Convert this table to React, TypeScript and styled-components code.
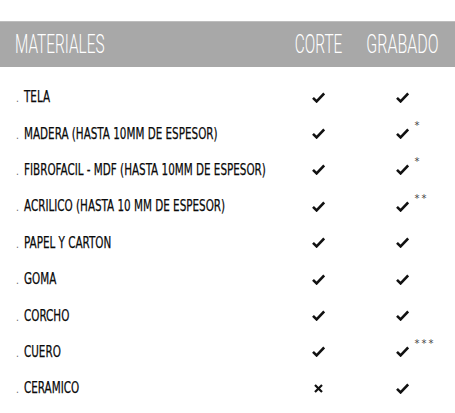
import React from 'react';
import styled, { createGlobalStyle } from 'styled-components';

const GlobalStyle = createGlobalStyle`
  html, body {
    margin: 0;
    padding: 0;
    background: #ffffff;
  }
`;

const Page = styled.div`
  padding-top: 21px;
  width: 455px;
  font-family: "DejaVu Sans Condensed", "DejaVu Sans", sans-serif;
`;

const HeaderBar = styled.div`
  display: grid;
  grid-template-columns: minmax(0, 1fr) 87px 80px;
  align-items: center;
  height: 45px;
  padding: 0 13px 0 15px;
  background: #a8a8a8;
  border-top: 1px solid #bdbdbd;
  color: #ffffff;
  font-family: Roboto, "Liberation Sans", sans-serif;
  font-size: 25px;
  font-weight: 300;
`;

const HeadCell = styled.div<{ $align?: 'flex-start' | 'center' }>`
  display: flex;
  justify-content: ${(p) => p.$align || 'flex-start'};
  white-space: nowrap;
`;

// the reference uses a very narrow face; squeeze what we have
const Narrow = styled.span<{ $scale: number; $origin?: string }>`
  display: inline-block;
  flex: none;
  white-space: nowrap;
  transform: scaleX(${(p) => p.$scale});
  transform-origin: ${(p) => p.$origin || 'left'} center;
`;

const List = styled.div`
  padding-top: 12px;
`;

const Row = styled.div`
  display: grid;
  grid-template-columns: minmax(0, 1fr) 87px 80px;
  align-items: center;
  height: 36.4px;
  padding: 0 13px 0 16px;
  color: #0a0a0a;
  font-size: 15px;
`;

const Label = styled.div`
  display: flex;
  align-items: baseline;
  gap: 5px;
  -webkit-text-stroke: 0.25px #0a0a0a;
`;

const Dot = styled.span`
  color: #666666;
  font-size: 10px;
  -webkit-text-stroke: 0;
`;

const Mark = styled.div`
  position: relative;
  justify-self: center;
  display: flex;
  align-items: center;
`;

const Stars = styled.span`
  position: absolute;
  left: 19px;
  top: -9px;
  font-size: 11px;
  color: #444444;
  letter-spacing: 2px;
  white-space: nowrap;
`;

const Check = () => (
  <svg width="13" height="11" viewBox="0 0 13 11">
    <path d="M1 5.8 L4.6 9.4 L12.2 1.4" fill="none" stroke="#111" strokeWidth="2.6" strokeLinejoin="miter" />
  </svg>
);

const Cross = () => (
  <svg width="9" height="9" viewBox="0 0 9 9">
    <path d="M1 1 L8 8 M8 1 L1 8" stroke="#111" strokeWidth="2.2" />
  </svg>
);

type Material = { name: string; corte: boolean; stars?: string };

const materials: Material[] = [
  { name: 'TELA', corte: true },
  { name: 'MADERA (HASTA 10MM DE ESPESOR)', corte: true, stars: '*' },
  { name: 'FIBROFACIL - MDF (HASTA 10MM DE ESPESOR)', corte: true, stars: '*' },
  { name: 'ACRILICO (HASTA 10 MM DE ESPESOR)', corte: true, stars: '**' },
  { name: 'PAPEL Y CARTON', corte: true },
  { name: 'GOMA', corte: true },
  { name: 'CORCHO', corte: true },
  { name: 'CUERO', corte: true, stars: '***' },
  { name: 'CERAMICO', corte: false },
];

const App = () => {
  return (
    <Page>
      <GlobalStyle />
      <HeaderBar>
        <HeadCell>
          <Narrow $scale={0.615}>MATERIALES</Narrow>
        </HeadCell>
        <HeadCell $align="center">
          <Narrow $scale={0.615} $origin="center">CORTE</Narrow>
        </HeadCell>
        <HeadCell $align="center">
          <Narrow $scale={0.64} $origin="center">GRABADO</Narrow>
        </HeadCell>
      </HeaderBar>
      <List>
        {materials.map((m) => (
          <Row key={m.name}>
            <Label>
              <Dot>.</Dot>
              <Narrow $scale={0.77}>{m.name}</Narrow>
            </Label>
            <Mark>{m.corte ? <Check /> : <Cross />}</Mark>
            <Mark>
              <Check />
              {m.stars && <Stars>{m.stars}</Stars>}
            </Mark>
          </Row>
        ))}
      </List>
    </Page>
  );
};

export default App;
